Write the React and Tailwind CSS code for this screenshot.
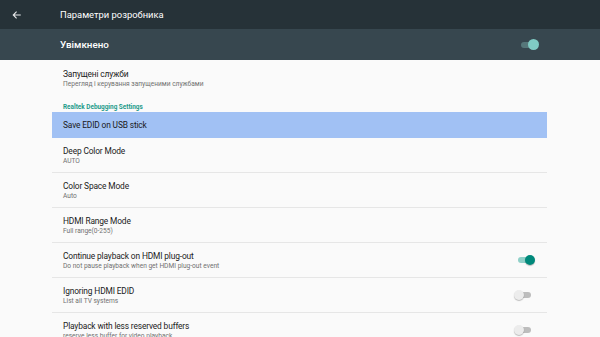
const rows = [
  { title: "Deep Color Mode", sub: "AUTO" },
  { title: "Color Space Mode", sub: "Auto" },
  { title: "HDMI Range Mode", sub: "Full range(0-255)" },
  { title: "Continue playback on HDMI plug-out", sub: "Do not pause playback when get HDMI plug-out event", toggle: "on" },
  { title: "Ignoring HDMI EDID", sub: "List all TV systems", toggle: "off" },
  { title: "Playback with less reserved buffers", sub: "reserve less buffer for video playback", toggle: "off" },
];

const Toggle = ({ state }) => {
  if (state === "on") {
    return (
      <div className="relative h-[6px] w-[13px] rounded-full bg-[#8fd0c8]">
        <div className="absolute right-[-4px] top-[-2px] h-[10px] w-[10px] rounded-full bg-[#00897b] shadow-[0_1px_1px_rgba(0,0,0,0.25)]" />
      </div>
    );
  }
  return (
    <div className="relative h-[6px] w-[13px] rounded-full bg-[#bdbdbd]">
      <div className="absolute left-[-4px] top-[-2px] h-[10px] w-[10px] rounded-full bg-[#ececec] shadow-[0_1px_1px_rgba(0,0,0,0.25)]" />
    </div>
  );
};

export default function App() {
  return (
    <div className="h-[337px] w-[600px] overflow-hidden bg-[#fafafa] font-['Roboto',sans-serif]">
      <div className="flex h-[29px] items-center bg-[#263238] text-white">
        <svg width="10" height="10" viewBox="0 0 24 24" className="ml-[12px]" fill="none" stroke="#e8eaeb" strokeWidth="2.6">
          <path d="M21 12H4M11 4l-8 8 8 8" />
        </svg>
        <span className="ml-[38px] text-[9.4px] leading-[12px]">Параметри розробника</span>
      </div>
      <div className="flex h-[31px] items-center justify-between bg-[#37474f] pl-[60px] pr-[66px] text-white">
        <span className="text-[9.8px] font-medium leading-[12px]">Увімкнено</span>
        <div className="relative h-[6px] w-[13px] rounded-full bg-[#56777a]">
          <div className="absolute right-[-5px] top-[-3px] h-[11px] w-[11px] rounded-full bg-[#80cbc4]" />
        </div>
      </div>

      <div className="ml-[52px] w-[495px]">
        <div className="pl-[11px] pt-[9px]">
          <div className="text-[8.4px] leading-[10px] tracking-[-0.15px] text-[#1a1a1a]">Запущені служби</div>
          <div className="text-[6.6px] leading-[10px] text-[#707070]">Перегляд і керування запущеними службами</div>
        </div>
        <div className="mt-[13px] pl-[11px] text-[6.4px] font-bold leading-[10px] text-[#1e9a8a]">
          Realtek Debugging Settings
        </div>
        <div className="flex h-[26px] items-center bg-[#a1c1f4] pl-[11px] text-[8.4px] tracking-[-0.15px] text-[#1a1a1a]">
          Save EDID on USB stick
        </div>
        {rows.map((row) => (
          <div
            key={row.title}
            className="flex h-[35px] items-start justify-between border-b border-[#e6e6e6] pl-[11px] pr-[12px] pt-[8px]"
          >
            <div>
              <div className="text-[8.4px] leading-[10px] tracking-[-0.15px] text-[#1a1a1a]">{row.title}</div>
              <div className="text-[6.6px] leading-[10px] text-[#707070]">{row.sub}</div>
            </div>
            {row.toggle ? (
              <div className="mt-[6px] pr-[4px]">
                <Toggle state={row.toggle} />
              </div>
            ) : null}
          </div>
        ))}
      </div>
    </div>
  );
}
